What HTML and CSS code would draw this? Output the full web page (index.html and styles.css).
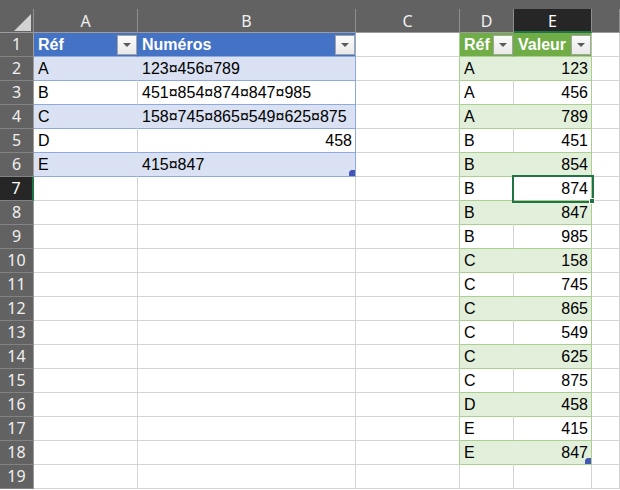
FILE: index.html
```html
<!DOCTYPE html>
<html lang="fr">
<head>
<meta charset="utf-8">
<title>Feuille</title>
<link rel="stylesheet" href="styles.css">
</head>
<body>
<div class="sheet">
  <div class="topband"></div>

  <div class="ch corner"><span class="tri"></span></div>
  <div class="ch">A</div>
  <div class="ch">B</div>
  <div class="ch">C</div>
  <div class="ch">D</div>
  <div class="ch sel">E</div>
  <div class="ch"></div>

  <div class="rh">1</div>
  <div class="c b-h flt">Réf<span class="fb"></span></div>
  <div class="c b-h b-end flt">Numéros<span class="fb"></span></div>
  <div class="c g-left"></div>
  <div class="c g-h flt">Réf<span class="fb"></span></div>
  <div class="c g-h g-end flt">Valeur<span class="fb"></span></div>
  <div class="c"></div>

  <div class="rh">2</div>
  <div class="c b-s">A</div>
  <div class="c b-s b-end">123¤456¤789</div>
  <div class="c g-left"></div>
  <div class="c g-s">A</div>
  <div class="c g-s g-end n">123</div>
  <div class="c"></div>

  <div class="rh">3</div>
  <div class="c b-w">B</div>
  <div class="c b-w b-end">451¤854¤874¤847¤985</div>
  <div class="c g-left"></div>
  <div class="c g-w">A</div>
  <div class="c g-w g-end n">456</div>
  <div class="c"></div>

  <div class="rh">4</div>
  <div class="c b-s">C</div>
  <div class="c b-s b-end">158¤745¤865¤549¤625¤875</div>
  <div class="c g-left"></div>
  <div class="c g-s">A</div>
  <div class="c g-s g-end n">789</div>
  <div class="c"></div>

  <div class="rh">5</div>
  <div class="c b-w">D</div>
  <div class="c b-w b-end n">458</div>
  <div class="c g-left"></div>
  <div class="c g-w">B</div>
  <div class="c g-w g-end n">451</div>
  <div class="c"></div>

  <div class="rh">6</div>
  <div class="c b-s">E</div>
  <div class="c b-s b-end last">415¤847<span class="rsz"></span></div>
  <div class="c g-left"></div>
  <div class="c g-s">B</div>
  <div class="c g-s g-end n">854</div>
  <div class="c"></div>

  <div class="rh sel">7</div>
  <div class="c"></div>
  <div class="c"></div>
  <div class="c g-left"></div>
  <div class="c g-w">B</div>
  <div class="c g-w g-end n active">874</div>
  <div class="c"></div>

  <div class="rh">8</div>
  <div class="c"></div>
  <div class="c"></div>
  <div class="c g-left"></div>
  <div class="c g-s">B</div>
  <div class="c g-s g-end n">847</div>
  <div class="c"></div>

  <div class="rh">9</div>
  <div class="c"></div>
  <div class="c"></div>
  <div class="c g-left"></div>
  <div class="c g-w">B</div>
  <div class="c g-w g-end n">985</div>
  <div class="c"></div>

  <div class="rh">10</div>
  <div class="c"></div>
  <div class="c"></div>
  <div class="c g-left"></div>
  <div class="c g-s">C</div>
  <div class="c g-s g-end n">158</div>
  <div class="c"></div>

  <div class="rh">11</div>
  <div class="c"></div>
  <div class="c"></div>
  <div class="c g-left"></div>
  <div class="c g-w">C</div>
  <div class="c g-w g-end n">745</div>
  <div class="c"></div>

  <div class="rh">12</div>
  <div class="c"></div>
  <div class="c"></div>
  <div class="c g-left"></div>
  <div class="c g-s">C</div>
  <div class="c g-s g-end n">865</div>
  <div class="c"></div>

  <div class="rh">13</div>
  <div class="c"></div>
  <div class="c"></div>
  <div class="c g-left"></div>
  <div class="c g-w">C</div>
  <div class="c g-w g-end n">549</div>
  <div class="c"></div>

  <div class="rh">14</div>
  <div class="c"></div>
  <div class="c"></div>
  <div class="c g-left"></div>
  <div class="c g-s">C</div>
  <div class="c g-s g-end n">625</div>
  <div class="c"></div>

  <div class="rh">15</div>
  <div class="c"></div>
  <div class="c"></div>
  <div class="c g-left"></div>
  <div class="c g-w">C</div>
  <div class="c g-w g-end n">875</div>
  <div class="c"></div>

  <div class="rh">16</div>
  <div class="c"></div>
  <div class="c"></div>
  <div class="c g-left"></div>
  <div class="c g-s">D</div>
  <div class="c g-s g-end n">458</div>
  <div class="c"></div>

  <div class="rh">17</div>
  <div class="c"></div>
  <div class="c"></div>
  <div class="c g-left"></div>
  <div class="c g-w">E</div>
  <div class="c g-w g-end n">415</div>
  <div class="c"></div>

  <div class="rh">18</div>
  <div class="c"></div>
  <div class="c"></div>
  <div class="c g-left"></div>
  <div class="c g-s">E</div>
  <div class="c g-s g-end n last">847<span class="rsz"></span></div>
  <div class="c"></div>

  <div class="rh">19</div>
  <div class="c"></div>
  <div class="c"></div>
  <div class="c"></div>
  <div class="c"></div>
  <div class="c"></div>
  <div class="c"></div>
</div>
</body>
</html>
```
FILE: styles.css
```css
html, body {
  margin: 0;
  padding: 0;
  background: #ffffff;
  overflow: hidden;
}

.sheet {
  display: grid;
  grid-template-columns: 34px 104px 218px 104px 54px 78px 1fr;
  grid-template-rows: 9px 24px repeat(19, 24px);
  width: 620px;
  height: 490px;
  background: #ffffff;
}

.topband {
  grid-column: 1 / -1;
  background: #626262;
}

/* column headers */
.ch {
  box-sizing: border-box;
  background: #626262;
  border-right: 1px solid #8e8e8e;
  border-bottom: 1px solid #9c9c9c;
  color: #f0f0f0;
  font-family: "Noto Sans", "Open Sans", sans-serif;
  font-size: 16px;
  line-height: 22px;
  padding-top: 1px;
  text-align: center;
}

.ch.sel {
  background: #262626;
  color: #ffffff;
  border-bottom: 2px solid #217346;
}

.corner {
  display: flex;
  justify-content: flex-end;
  align-items: flex-end;
  padding: 0 2px 1px 0;
}

.tri {
  width: 17px;
  height: 17px;
  background: #d2d2d2;
  clip-path: polygon(100% 0, 100% 100%, 0 100%);
}

/* row headers */
.rh {
  box-sizing: border-box;
  background: #626262;
  border-right: 1px solid #9c9c9c;
  border-bottom: 1px solid #838383;
  color: #f0f0f0;
  font-family: "Noto Sans", "Open Sans", sans-serif;
  font-size: 16px;
  line-height: 23px;
  text-align: center;
}

.rh.sel {
  background: #262626;
  color: #ffffff;
  border-right: 2px solid #217346;
}

/* cells */
.c {
  box-sizing: border-box;
  border-right: 1px solid #d4d4d4;
  border-bottom: 1px solid #d4d4d4;
  padding: 1px 3px 0 4px;
  font-family: "Liberation Sans", Arial, sans-serif;
  font-size: 16px;
  line-height: 22px;
  color: #000000;
  white-space: nowrap;
  overflow: hidden;
}

.n {
  text-align: right;
}

/* blue table */
.b-h {
  background: #4472c4;
  color: #ffffff;
  font-weight: bold;
  border-right-color: #4472c4;
  border-bottom-color: #8ea9db;
}

.b-s {
  background: #d9e1f2;
  border-right-color: #d9e1f2;
  border-bottom-color: #8ea9db;
}

.b-w {
  border-bottom-color: #8ea9db;
}

.b-end {
  border-right-color: #8ea9db;
}

/* green table */
.g-h {
  background: #70ad47;
  color: #ffffff;
  font-weight: bold;
  border-right-color: #70ad47;
  border-bottom-color: #a9d08e;
}

.g-s {
  background: #e2efda;
  border-right-color: #e2efda;
  border-bottom-color: #a9d08e;
}

.g-w {
  border-bottom-color: #a9d08e;
}

.g-end {
  border-right-color: #a9d08e;
}

.g-left {
  border-right-color: #a9d08e;
}

/* header filter buttons */
.flt {
  display: flex;
  justify-content: space-between;
  align-items: center;
  padding-right: 0;
  overflow: visible;
}

.fb {
  box-sizing: border-box;
  flex: none;
  width: 20px;
  height: 20px;
  margin-top: -1px;
  border: 1px solid #a3a3a3;
  background: linear-gradient(#fbfbfb, #e9e9e9);
  display: flex;
  justify-content: center;
  align-items: center;
}

.fb::before {
  content: "";
  width: 0;
  height: 0;
  margin-top: 1px;
  border-left: 4px solid transparent;
  border-right: 4px solid transparent;
  border-top: 4px solid #5a5a5a;
}

/* table resize handle */
.last {
  position: relative;
  overflow: visible;
}

.rsz {
  position: absolute;
  right: 0;
  bottom: 0;
  width: 6px;
  height: 6px;
  background: #4457b4;
  clip-path: polygon(34% 0, 100% 0, 100% 100%, 0 100%, 0 34%);
}

/* active cell */
.active {
  position: relative;
  z-index: 2;
  overflow: visible;
  outline: 2px solid #217346;
  outline-offset: 0;
}

.active::after {
  content: "";
  position: absolute;
  right: -4px;
  bottom: -4px;
  width: 4px;
  height: 4px;
  background: #217346;
  border: 1px solid #ffffff;
}
```
